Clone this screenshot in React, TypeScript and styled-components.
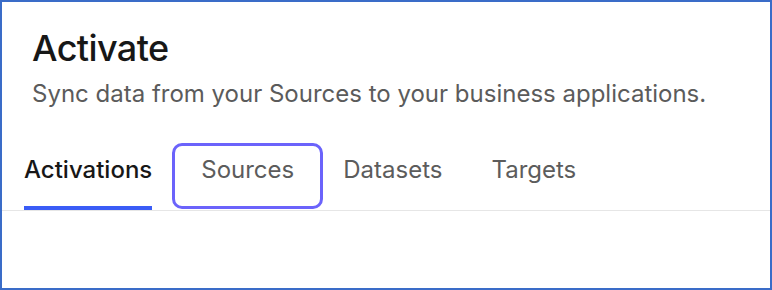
import React from "react";
import styled, { createGlobalStyle } from "styled-components";

const Global = createGlobalStyle`
  html, body { margin: 0; padding: 0; background: #ffffff; }
  * { box-sizing: border-box; }
  body { font-family: Inter, "Noto Sans", sans-serif; }
`;

const Frame = styled.div`
  width: 772px;
  height: 290px;
  border: 2px solid #3a6cc8;
  background: #ffffff;
  display: flex;
  flex-direction: column;
`;

const Header = styled.header`
  padding: 24px 0 0 30px;
  display: flex;
  flex-direction: column;
  gap: 9px;
`;

const Title = styled.h1`
  margin: 0;
  font-size: 36px;
  line-height: 44px;
  font-weight: 500;
  color: #171717;
  letter-spacing: -0.6px;
`;

const Subtitle = styled.p`
  margin: 0;
  font-size: 24px;
  line-height: 30px;
  font-weight: 400;
  color: #5b5b5b;
`;

const TabList = styled.nav`
  margin-top: 35px;
  padding-left: 22px;
  display: flex;
  gap: 49px;
  border-bottom: 1px solid #e6e6e6;
`;

const Tab = styled.button<{ $active?: boolean; $focused?: boolean }>`
  position: relative;
  background: none;
  border: none;
  padding: 11px 0 21px;
  margin: 0;
  font-family: inherit;
  font-size: 24px;
  line-height: 30px;
  font-weight: ${(p) => (p.$active ? 500 : 400)};
  color: ${(p) => (p.$active ? "#171717" : "#5c5c5c")};
  border-bottom: 4px solid ${(p) => (p.$active ? "#3a5cf6" : "transparent")};
  cursor: pointer;

  &::after {
    content: "";
    display: ${(p) => (p.$focused ? "block" : "none")};
    position: absolute;
    top: -1px;
    bottom: -3px;
    left: -29px;
    right: -29px;
    border: 3px solid #6b63fb;
    border-radius: 10px;
    pointer-events: none;
  }
`;

export default function App() {
  const tabs = ["Activations", "Sources", "Datasets", "Targets"];
  return (
    <>
      <Global />
      <Frame>
        <Header>
          <Title>Activate</Title>
          <Subtitle>Sync data from your Sources to your business applications.</Subtitle>
        </Header>
        <TabList>
          {tabs.map((t, i) => (
            <Tab key={t} $active={i === 0} $focused={i === 1}>
              {t}
            </Tab>
          ))}
        </TabList>
      </Frame>
    </>
  );
}
